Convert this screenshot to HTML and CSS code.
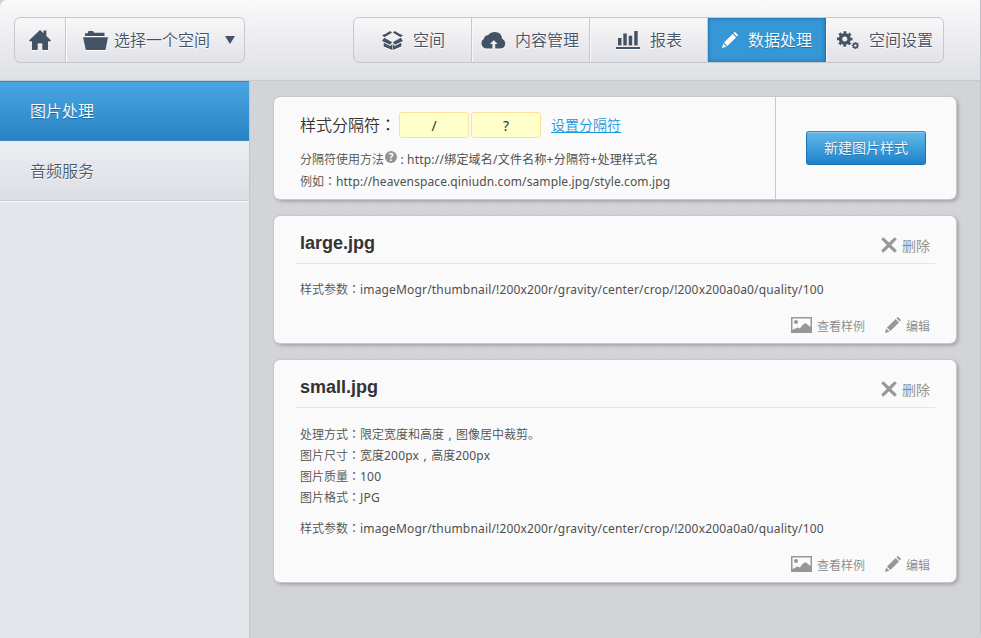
FILE: index.html
```html
<!DOCTYPE html>
<html lang="zh-CN">
<head>
<meta charset="utf-8">
<title>数据处理</title>
<link rel="stylesheet" href="styles.css">
</head>
<body>
<svg class="defs" aria-hidden="true">
  <symbol id="pencil" viewBox="0 0 16 16"><path d="M0 16 1.2 11.5 4.5 14.7ZM2 10.5 10.6 2 14 5.4 5.4 14ZM11.4 1.2 12.2 .4Q12.9-.2 13.6.5L15.5 2.4Q16.2 3.1 15.6 3.8L14.8 4.6Z"/></symbol>
  <symbol id="cross" viewBox="0 0 16 16"><path d="M2.3.2 8 5.6 13.7.2 15.8 2.2 10.2 7.9 15.8 13.6 13.7 15.7 8 10.2 2.3 15.7.2 13.6 5.8 7.9.2 2.2Z"/></symbol>
  <symbol id="picture" viewBox="0 0 21 16"><path fill-rule="evenodd" d="M0 0H21V16H0ZM1.5 1.5V13L6.5 10.5 9 11.5Q12 6.5 14.5 6.2L16 7.2 19.5 10V1.5Z"/><circle cx="5" cy="5" r="2"/></symbol>
</svg>
<div class="app">
  <header class="topbar">
    <div class="group">
      <a class="home"><svg width="22" height="20" viewBox="0 0 22 20"><path d="M0 10.5 11 0 14.5 3.2V.6H17.4V6L22 10.5 20.8 11.5H19V20H13.3V13.6H8.7V20H3V11.5H1.2Z"/></svg></a>
      <a class="picker"><svg width="25" height="19" viewBox="0 0 25 19"><path d="M2 5V2.2H4.7L5.4 0H10L11 1.7H21.5V5ZM0 6.3H25L22.5 19H2.8Z"/></svg><span>选择一个空间</span><i class="caret"></i></a>
    </div>
    <nav class="group nav">
      <a class="tab space"><svg width="21" height="19" viewBox="0 0 21 19"><path d="M3.2 3 8.3 0 10 1.7 2.5 6.2 0 4.2ZM17.8 3 12.7 0 11 1.7 18.5 6.2 21 4.2ZM2.2 6.8 10.2 11.2 8 13.8 0 10ZM18.8 6.8 10.8 11.2 13 13.8 21 10ZM1.7 11.8 8.3 15 10.2 13V19L1.7 15.5ZM19.3 11.8 12.7 15 10.8 13V19L19.3 15.5Z"/></svg><span>空间</span></a>
      <a class="tab content"><svg width="25" height="17" viewBox="0 0 25 17"><path d="M5.5 16.5A5.3 5.3 0 0 1 3 6.7Q3.4 3.1 7 3.2 9.7 0 14 0 20.5 0 21.2 7A5 5 0 0 1 20 16.5H14.2V12H16.5L12.8 8.3 9.1 12H11.4V16.5Z"/></svg><span>内容管理</span></a>
      <a class="tab report"><svg width="24" height="18" viewBox="0 0 24 18"><path d="M0 16H24V18H0ZM2 7H5.5V14.5H2ZM7.3 2.5H10.8V14.5H7.3ZM12.7 4.7H16.2V14.5H12.7ZM18.2 0H21.7V14.5H18.2Z"/></svg><span>报表</span></a>
      <a class="tab process active"><svg width="16" height="16"><use href="#pencil"/></svg><span>数据处理</span></a>
      <a class="tab settings"><svg width="22" height="19" viewBox="0 0 22 19"><g fill="none" stroke="currentColor"><circle cx="7.8" cy="8" r="4.3" stroke-width="3.6"/><circle cx="7.8" cy="8" r="6.7" stroke-width="2.2" stroke-dasharray="2.9 2.36" stroke-dashoffset="1.45"/><circle cx="18.4" cy="14.6" r="2" stroke-width="1.6"/><circle cx="18.4" cy="14.6" r="3.1" stroke-width="1.2" stroke-dasharray="1.3 1.13" stroke-dashoffset=".6"/></g></svg><span>空间设置</span></a>
    </nav>
  </header>
  <div class="main">
    <aside class="sidebar">
      <a class="side active">图片处理</a>
      <a class="side">音频服务</a>
    </aside>
    <main class="cards">
      <section class="card intro">
        <div class="info">
          <div class="separators"><span>样式分隔符<b class="mark" lang="zh-TW">：</b></span><span class="field">/</span><span class="field">?</span><a class="link">设置分隔符</a></div>
          <p class="hint">分隔符使用方法<span class="help">?</span><b class="narrow">:</b><span class="usage">http://绑定域名/文件名称+分隔符+处理样式名</span></p>
          <p>例如<b class="mark" lang="zh-TW">：</b><span class="example">http://heavenspace.qiniudn.com/sample.jpg/style.com.jpg</span></p>
        </div>
        <div class="create"><a class="button">新建图片样式</a></div>
      </section>
      <section class="card large">
        <div class="title"><h2>large.jpg</h2><a class="delete"><svg width="16" height="16"><use href="#cross"/></svg><span>删除</span></a></div>
        <p class="params">样式参数<b class="mark" lang="zh-TW">：</b><span class="path">imageMogr/thumbnail/!200x200r/gravity/center/crop/!200x200a0a0/quality/100</span></p>
        <div class="actions"><a><svg width="21" height="16"><use href="#picture"/></svg><span>查看样例</span></a><a class="edit"><svg width="16" height="16"><use href="#pencil"/></svg><span>编辑</span></a></div>
      </section>
      <section class="card small">
        <div class="title"><h2>small.jpg</h2><a class="delete"><svg width="16" height="16"><use href="#cross"/></svg><span>删除</span></a></div>
        <div class="details">
          <p>处理方式<b class="mark" lang="zh-TW">：</b>限定宽度和高度<b class="comma">,</b>图像居中裁剪。</p>
          <p>图片尺寸<b class="mark" lang="zh-TW">：</b>宽度<span class="value">200px</span><b class="comma">,</b>高度<span class="value">200px</span></p>
          <p>图片质量<b class="mark" lang="zh-TW">：</b><span class="value">100</span></p>
          <p>图片格式<b class="mark" lang="zh-TW">：</b><span class="value">JPG</span></p>
        </div>
        <p class="params">样式参数<b class="mark" lang="zh-TW">：</b><span class="path">imageMogr/thumbnail/!200x200r/gravity/center/crop/!200x200a0a0/quality/100</span></p>
        <div class="actions"><a><svg width="21" height="16"><use href="#picture"/></svg><span>查看样例</span></a><a class="edit"><svg width="16" height="16"><use href="#pencil"/></svg><span>编辑</span></a></div>
      </section>
    </main>
  </div>
</div>
</body>
</html>
```
FILE: styles.css
```css
* { box-sizing: border-box; }
body { margin: 0; height: 638px; overflow: hidden; background: #d0d1d5; font: 350 12px/22px "Noto Sans", "Noto Sans CJK SC", sans-serif; color: #505050; }
.defs { position: absolute; width: 0; height: 0; }
svg { fill: currentColor; flex: none; }
p, h2 { margin: 0; }
p { white-space: nowrap; }
.app { width: 981px; height: 638px; display: flex; flex-direction: column; border-right: 1px solid #c0c2c7; border-radius: 7px 0 7px 0; overflow: hidden; }
.topbar { height: 81px; flex: none; display: flex; justify-content: space-between; padding: 17px 36px 0 14px; border-bottom: 1px solid #c8c9ce; background: linear-gradient(#f9f9fa, #dfe0e5); color: #435365; font-size: 16px; }
.group { display: flex; height: 46px; border: 1px solid #c6c8cc; border-radius: 6px; background: linear-gradient(#f8f8f9, #e1e2e7); text-shadow: 0 1px #fff; }
.group svg { filter: drop-shadow(0 1px 0 #fff); }
.group a { display: flex; align-items: center; white-space: nowrap; }
.home { width: 51px; justify-content: center; border-right: 1px solid #c6c8cc; }
.picker { width: 178px; padding-left: 16px; gap: 6px; border-left: 1px solid #fff; }
.caret { margin-left: 9px; border: 5.5px solid transparent; border-top: 8px solid #435365; border-bottom: 0; }
.tab { width: 118px; border-right: 1px solid #c6c8cc; }
.tab + .tab { box-shadow: inset 1px 0 #f8f8fa; }
.tab:last-child { width: 117px; border-right: 0; }
.space { padding-left: 28px; gap: 10px; }
.content { padding-left: 9px; gap: 9px; }
.report { padding-left: 26px; gap: 10px; }
.process { padding-left: 14px; gap: 10px; }
.settings { padding-left: 11px; gap: 10px; }
.group .tab.active { color: #fff; background: #3797d6; border-right-color: #2676b4; box-shadow: inset 0 0 4px #1969a8; text-shadow: 0 1px #2472aa; }
.tab.active svg { filter: none; }
.main { flex: 1; display: flex; }
.sidebar { width: 249px; flex: none; background: #e4e6eb; }
.side { display: block; height: 60px; padding-left: 30px; font-size: 16px; line-height: 60px; color: #4b596b; background: linear-gradient(#edeef2, #dcdee4); text-shadow: 0 1px #fff; border-bottom: 1px solid #c9cbd1; box-shadow: 0 1px #fbfbfc; }
.side.active { color: #fff; background: linear-gradient(#4ba5e3, #2783c2); border-top: 1px solid #4385b5; border-bottom-color: #3c87bf; line-height: 58px; text-shadow: 0 1px #1c689f; }
.cards { flex: 1; padding: 16px 23px 0 24px; border-left: 1px solid #c4c6cc; background: repeating-linear-gradient(90deg, #d1d2d6 0 1px, #d4d5d9 1px 3px); }
.card { width: 682px; margin-bottom: 17px; border-radius: 6px; background: #fafafa; box-shadow: 0 0 0 1px #c6c8cb, 2px 2px 4px #92949a; }
.intro { height: 102px; display: flex; }
.info { width: 502px; padding: 15px 0 0 26px; border-right: 1px solid #c8cacd; }
.separators { display: flex; height: 26px; align-items: center; margin-bottom: 11px; font-size: 16px; color: #333; }
.mark { font-family: "Noto Sans CJK TC", sans-serif; font-weight: 400; line-height: 0; }
.comma { display: inline-block; width: 12px; text-align: center; font-weight: 400; line-height: 21px; }
.narrow { width: 10px; font-weight: 400; text-align: center; }
.field { width: 70px; height: 26px; margin-left: 3px; border: 1px solid #ffdf9c; border-radius: 3px; background: #ffffca; text-align: center; font-size: 14px; font-weight: 400; line-height: 25px; }
.field + .field { margin-left: 2px; }
.link { margin-left: 10px; font-size: 14px; color: #1e98db; text-decoration: underline; text-underline-offset: 2px; }
.hint { display: flex; }
.help { width: 12px; height: 12px; margin: 2px 0 0 1px; border-radius: 50%; background: #929292; color: #fff; font: bold 10px/12px "Open Sans", sans-serif; text-align: center; }
.usage { font-weight: 400; letter-spacing: .22px; }
.example { font-weight: 400; letter-spacing: .1px; }
.path { font-weight: 400; letter-spacing: .165px; }
.value { font-weight: 400; letter-spacing: .2px; }
.create { flex: 1; display: flex; align-items: center; justify-content: center; }
.button { width: 120px; height: 34px; border: 1px solid #1c73b5; border-top-color: #2b87d0; border-radius: 3px; background: linear-gradient(#61b9e8, #1e81ca); box-shadow: inset 0 1px #8bcdf2; color: #fff; font-size: 14px; line-height: 32px; text-align: center; text-shadow: 0 1px #2575b0; }
.large { height: 127px; padding: 0 21px 0 22px; }
.small { height: 222px; padding: 0 21px 0 22px; }
.title { display: flex; justify-content: space-between; height: 48px; padding: 0 5px 0 4px; border-bottom: 1px solid #e6e6e7; }
h2 { font: bold 18px/54px "Liberation Sans", sans-serif; color: #333; }
.delete { display: flex; align-items: center; gap: 5px; padding-top: 11px; font-size: 14px; color: #888; }
.delete span { padding-top: 2px; }
.delete svg, .actions svg { color: #979797; }
.params { padding: 15px 0 0 4px; }
.details { padding: 16px 0 0 4px; line-height: 21px; }
.details + .params { padding-top: 10px; }
.actions { display: flex; justify-content: flex-end; gap: 20px; padding: 15px 5px 0 0; color: #888; }
.actions a { display: flex; align-items: center; gap: 5px; }
.actions svg { margin-top: -4px; }
```
